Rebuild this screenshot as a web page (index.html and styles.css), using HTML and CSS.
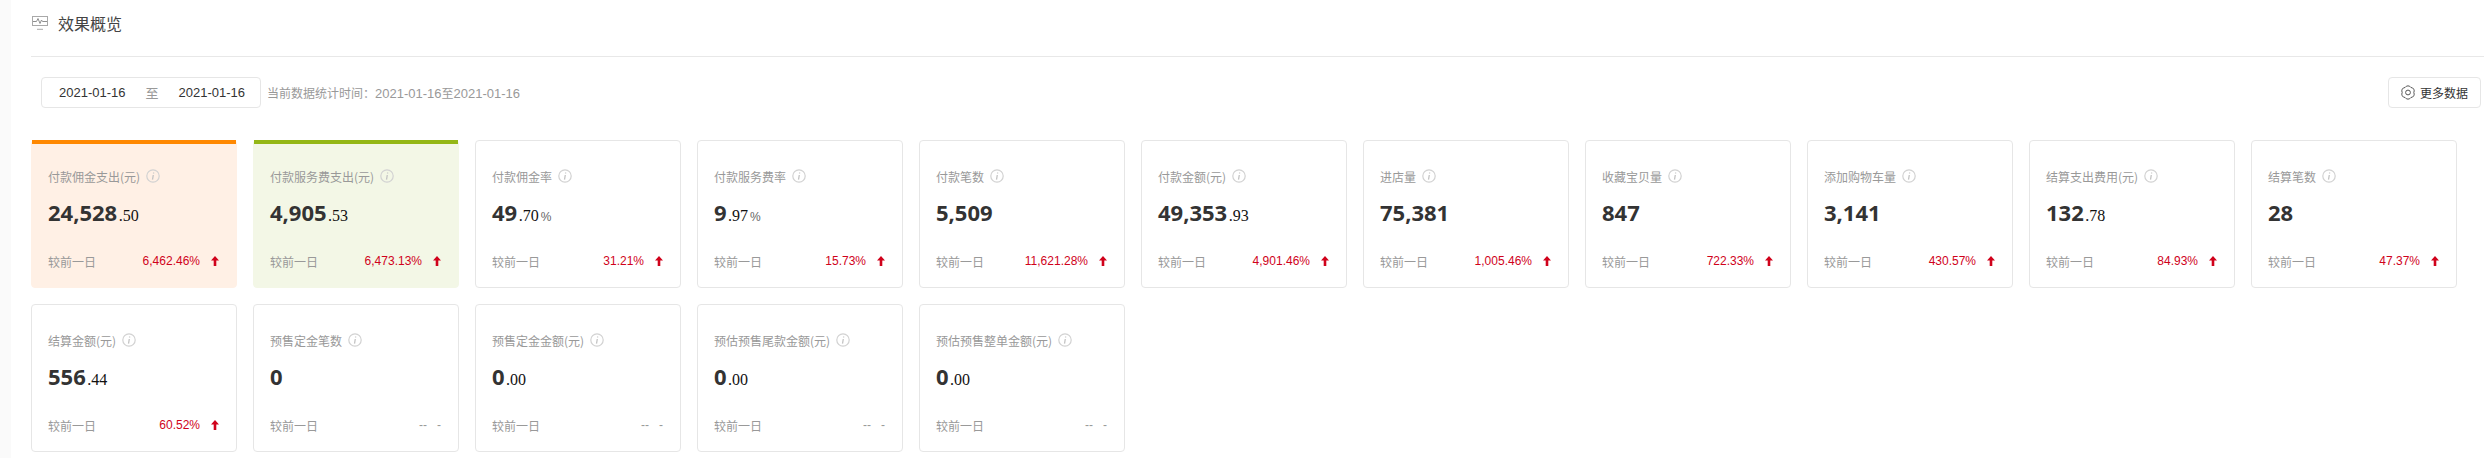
FILE: index.html
```html
<!DOCTYPE html>
<html lang="zh-CN">
<head>
  <meta charset="UTF-8" />
  <title>效果概览</title>
  <link rel="stylesheet" href="styles.css">
</head>
<body>
  <div class="page">
    <div class="title-bar">
      <svg class="title-icon" width="16" height="15" viewBox="0 0 16 15" fill="none" stroke="#a9a9a9" stroke-width="1">
        <rect x="0.5" y="1.500" width="15" height="9" />
        <path d="M1 6.500h3.500l1.500-3 2 5 1.500-3.500 1 1.500h4.500" stroke="#8f8f8f" />
        <path d="M5 14.500h6" stroke="#bbb" stroke-width="1.500" />
      </svg>
      <span class="title">效果概览</span>
    </div>

    <div class="toolbar">
      <div class="date-range">
        <span>2021-01-16</span>
        <span class="to">至</span>
        <span>2021-01-16</span>
      </div>
      <span class="stat-time">当前数据统计时间：<span class="date">2021-01-16</span>至<span class="date">2021-01-16</span></span>
      <button class="more">
        <svg width="14" height="15" viewBox="0 0 14 15" fill="none" stroke="#555" stroke-width="1">
          <path d="M12.800 7.500A3.400 3.400 0 0 1 9.900 12.520 3.400 3.400 0 0 1 4.100 12.520 3.400 3.400 0 0 1 1.200 7.500 3.400 3.400 0 0 1 4.100 2.480 3.400 3.400 0 0 1 9.900 2.480 3.400 3.400 0 0 1 12.800 7.500z" />
          <circle cx="7" cy="7.500" r="2.400" />
        </svg>
        更多数据
      </button>
    </div>

    <div class="cards" id="cards"></div>
  </div>

  <script>
    const items = [
      { name: '付款佣金支出(元)', big: '24,528', small: '.50', rate: '6,462.46%', type: 'orange' },
      { name: '付款服务费支出(元)', big: '4,905', small: '.53', rate: '6,473.13%', type: 'green' },
      { name: '付款佣金率', big: '49', small: '.70', unit: '%', rate: '31.21%' },
      { name: '付款服务费率', big: '9', small: '.97', unit: '%', rate: '15.73%' },
      { name: '付款笔数', big: '5,509', rate: '11,621.28%' },
      { name: '付款金额(元)', big: '49,353', small: '.93', rate: '4,901.46%' },
      { name: '进店量', big: '75,381', rate: '1,005.46%' },
      { name: '收藏宝贝量', big: '847', rate: '722.33%' },
      { name: '添加购物车量', big: '3,141', rate: '430.57%' },
      { name: '结算支出费用(元)', big: '132', small: '.78', rate: '84.93%' },
      { name: '结算笔数', big: '28', rate: '47.37%' },
      { name: '结算金额(元)', big: '556', small: '.44', rate: '60.52%' },
      { name: '预售定金笔数', big: '0' },
      { name: '预售定金金额(元)', big: '0', small: '.00' },
      { name: '预估预售尾款金额(元)', big: '0', small: '.00' },
      { name: '预估预售整单金额(元)', big: '0', small: '.00' }
    ];

    const infoIcon = `<svg class="info" width="14" height="14" viewBox="0 0 14 14" fill="none" stroke="#d2d2d2">
      <circle cx="7" cy="7" r="6.200" stroke-width="1.200" />
      <path d="M7.600 3.400v1M7.300 6l-.8 4.700" stroke="#c4c4c4" stroke-width="1.300" />
    </svg>`;

    const arrowIcon = `<svg class="arrow" width="8" height="10" viewBox="0 0 8 10">
      <path d="M4 0l4 4.500H5.300V10H2.700V4.500H0z" fill="#d0021b" />
    </svg>`;

    document.getElementById('cards').innerHTML = items.map(item => `
      <div class="card ${item.type || ''}">
        <div class="card-name">${item.name}${infoIcon}</div>
        <div class="card-value">${item.big}<span class="decimal">${item.small || ''}</span>${item.unit ? `<span class="unit">${item.unit}</span>` : ''}</div>
        <div class="card-foot">
          <span>较前一日</span>
          ${item.rate
            ? `<span class="rate">${item.rate}${arrowIcon}</span>`
            : '<span class="empty">--<i>-</i></span>'}
        </div>
      </div>`).join('');
  </script>
</body>
</html>
```

FILE: styles.css
```css
body {
  margin: 0;
  background: #fafafa;
  font-family: "Noto Sans CJK SC", "Noto Sans", sans-serif;
  color: #333;
}

.page {
  min-height: 458px;
  box-sizing: border-box;
  margin-left: 11px;
  padding-left: 20px;
  background: #fff;
}

.title-bar {
  display: flex;
  align-items: center;
  box-sizing: border-box;
  height: 57px;
  padding: 0 0 11px 1px;
  border-bottom: 1px solid #e8e8e8;
}

.title-icon {
  margin-right: 10px;
}

.title {
  font-size: 16px;
  color: #444;
}

.toolbar {
  display: flex;
  align-items: center;
  height: 31px;
  margin-top: 20px;
  padding-left: 10px;
  padding-right: 3px;
}

.date-range {
  display: flex;
  align-items: center;
  gap: 20px;
  box-sizing: border-box;
  width: 220px;
  height: 31px;
  padding-left: 17px;
  border: 1px solid #e6e6e6;
  border-radius: 4px;
  font-family: "Liberation Sans", "Noto Sans CJK SC", sans-serif;
  font-size: 13px;
  color: #333;
}

.to {
  color: #999;
}

.stat-time {
  margin-left: 6px;
  font-family: "Noto Sans CJK SC", sans-serif;
  font-size: 12px;
  color: #999;
}

.date {
  font-family: "Liberation Sans", sans-serif;
  font-size: 13px;
}

.more {
  display: flex;
  align-items: center;
  justify-content: center;
  gap: 5px;
  box-sizing: border-box;
  width: 93px;
  height: 31px;
  margin-left: auto;
  background: #fff;
  border: 1px solid #e6e6e6;
  border-radius: 4px;
  font-family: "Noto Sans CJK SC", sans-serif;
  font-size: 12px;
  color: #333;
}

.cards {
  display: grid;
  grid-template-columns: repeat(11, 206px);
  grid-auto-rows: 148px;
  gap: 16px;
  margin-top: 32px;
}

.card {
  display: flex;
  flex-direction: column;
  box-sizing: border-box;
  padding: 26px 16px 0;
  border: 1px solid #e6e6e6;
  border-radius: 4px;
  position: relative;
}

.card.orange {
  background: #fff0e5;
  border-color: #fff0e5;
}

.card.green {
  background: #f3f7e6;
  border-color: #f3f7e6;
}

.card.orange::before,
.card.green::before {
  content: "";
  position: absolute;
  top: -1px;
  left: 0;
  right: 0;
  height: 4px;
  background: #ff8800;
}

.card.green::before {
  background: #94b716;
}

.card-name {
  display: flex;
  align-items: center;
  gap: 6px;
  height: 18px;
  font-size: 12px;
  color: #999;
  white-space: nowrap;
}

.card-value {
  margin-top: 12px;
  height: 30px;
  line-height: 30px;
  font-family: "Noto Sans", sans-serif;
  font-size: 22px;
  font-weight: 700;
  color: #333;
}

.decimal {
  margin-left: 1.500px;
  font-family: "Liberation Serif", serif;
  font-size: 16px;
  font-weight: 400;
  color: #111;
}

.unit {
  margin-left: 2px;
  font-family: "Liberation Sans", sans-serif;
  font-size: 12px;
  font-weight: 400;
  color: #666;
}

.card-foot {
  display: flex;
  justify-content: space-between;
  align-items: center;
  margin-top: 25px;
  margin-right: 1px;
  height: 18px;
  font-size: 12px;
  color: #999;
}

.rate {
  display: flex;
  align-items: center;
  font-family: "Liberation Sans", sans-serif;
  color: #d0021b;
}

.arrow {
  margin-left: 11px;
}

.empty {
  font-family: "Liberation Sans", sans-serif;
  color: #999;
}

.empty i {
  font-style: normal;
  margin-left: 10px;
}
```
